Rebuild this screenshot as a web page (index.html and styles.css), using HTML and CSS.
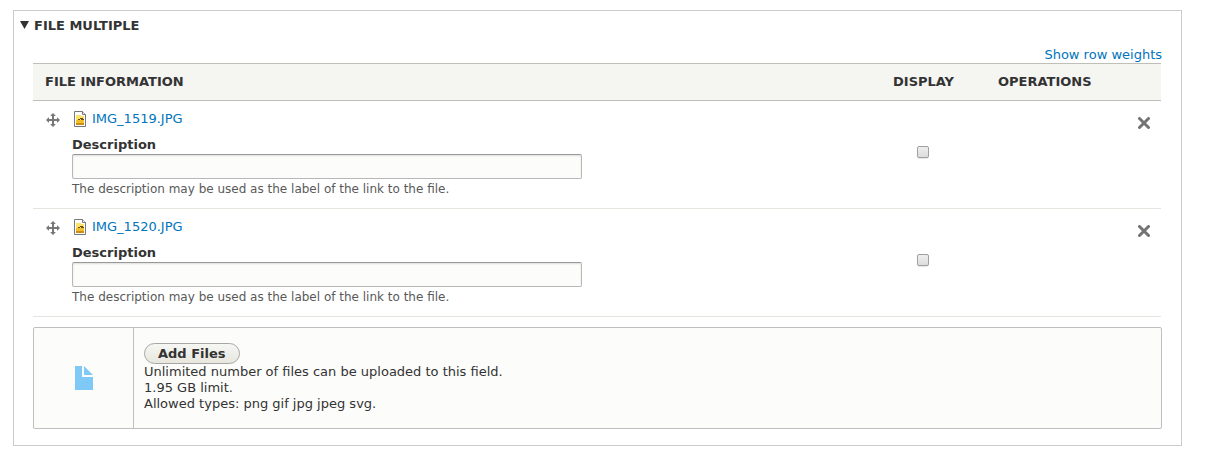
FILE: index.html
```
<!DOCTYPE html>
<html lang="en">
<head>
<meta charset="utf-8">
<title>File multiple</title>
<link rel="stylesheet" href="styles.css">
</head>
<body>
<svg class="sprites" aria-hidden="true">
  <symbol id="move" viewBox="0 0 14 14">
    <path fill="#787878" d="M7 0l2.500 2.500V3H8v3h3V4.500h.5L14 7l-2.500 2.500H11V8H8v3h1.500v.5L7 14l-2.500-2.500V11H6V8H3v1.500h-.5L0 7l2.500-2.500H3V6h3V3H4.500v-.5z"/>
  </symbol>
  <symbol id="image-file" viewBox="0 0 12 16">
    <path d="M.5.5h8l3 3v12H.5z" fill="#fff" stroke="#777"/>
    <path d="M8.500.5v3h3" fill="#eee" stroke="#777"/>
    <path d="M2 4h5v1h3v9H2z" fill="#fbe36a"/>
    <path d="M2 9h8v5H2z" fill="#f0bf2c"/>
    <path d="M2 12h8v2H2z" fill="#d08c14"/>
    <path d="M4 8h2V7h3v1h1v1H7V8H6v1H4z" fill="#6b4c10"/>
  </symbol>
  <symbol id="remove" viewBox="0 0 12 12">
    <path d="M1.500 1.500l9 9M10.500 1.500l-9 9" fill="none" stroke="#737373" stroke-width="3" stroke-linecap="round"/>
  </symbol>
  <symbol id="document" viewBox="0 0 18 24">
    <path fill="#7fc9f6" d="M0 0h7v11h11v13H0zM9 0l9 9H9z"/>
  </symbol>
</svg>
<details class="panel" open>
  <summary class="panel-title"><span class="arrow"></span>File multiple</summary>
  <div class="panel-body">
    <div class="weights"><a href="#">Show row weights</a></div>
    <div class="table-wrap">
    <table class="files">
      <thead>
        <tr><th class="info">File information</th><th class="display">Display</th><th class="operations">Operations</th></tr>
      </thead>
      <tbody>
        <tr>
          <td class="info">
            <div class="file-row">
              <a class="handle" href="#" aria-label="Drag to re-order"><svg><use href="#move"/></svg></a>
              <div class="file">
                <div class="file-name"><svg><use href="#image-file"/></svg><a href="#">IMG_1519.JPG</a></div>
                <label for="desc-1">Description</label>
                <input class="text" id="desc-1" type="text">
                <p class="help">The description may be used as the label of the link to the file.</p>
              </div>
            </div>
          </td>
          <td class="display"><input class="check" type="checkbox" aria-label="Display IMG_1519.JPG"></td>
          <td class="operations"><button class="remove" type="button" aria-label="Remove IMG_1519.JPG"><svg><use href="#remove"/></svg></button></td>
        </tr>
        <tr>
          <td class="info">
            <div class="file-row">
              <a class="handle" href="#" aria-label="Drag to re-order"><svg><use href="#move"/></svg></a>
              <div class="file">
                <div class="file-name"><svg><use href="#image-file"/></svg><a href="#">IMG_1520.JPG</a></div>
                <label for="desc-2">Description</label>
                <input class="text" id="desc-2" type="text">
                <p class="help">The description may be used as the label of the link to the file.</p>
              </div>
            </div>
          </td>
          <td class="display"><input class="check" type="checkbox" aria-label="Display IMG_1520.JPG"></td>
          <td class="operations"><button class="remove" type="button" aria-label="Remove IMG_1520.JPG"><svg><use href="#remove"/></svg></button></td>
        </tr>
      </tbody>
    </table>
    </div>
    <div class="upload">
      <div class="upload-icon"><svg><use href="#document"/></svg></div>
      <div class="upload-info">
        <button class="add" type="button">Add Files</button>
        <div>Unlimited number of files can be uploaded to this field.</div>
        <div>1.95 GB limit.</div>
        <div>Allowed types: png gif jpg jpeg svg.</div>
      </div>
    </div>
  </div>
</details>
</body>
</html>
```
FILE: styles.css
```
* {
  box-sizing: border-box;
}

body {
  margin: 10px 25px 13px 13px;
  background: #fff;
  color: #333;
  font: 13px/16px "DejaVu Sans", sans-serif;
}

a {
  color: #0074bd;
  text-decoration: none;
}

svg {
  display: block;
}

.sprites {
  display: none;
}

.panel {
  border: 1px solid #ccc;
}

.panel-title {
  display: flex;
  align-items: center;
  gap: 5px;
  padding: 7px 6px 6px;
  font-weight: bold;
  text-transform: uppercase;
  list-style: none;
}

.arrow {
  width: 9px;
  height: 8px;
  margin-bottom: 2px;
  background: #333;
  clip-path: polygon(0 0, 100% 0, 50% 100%);
}

.panel-body {
  padding: 7px 19px 16px;
}

.weights {
  text-align: right;
}

.table-wrap {
  padding-right: 1px;
}

.files {
  width: 100%;
  border-collapse: separate;
  border-spacing: 0;
  table-layout: fixed;
}

.files th {
  padding: 10px 12px;
  border: solid #bfbfba;
  border-width: 1px 0;
  background: #f5f5f2;
  text-align: left;
  text-transform: uppercase;
}

.files td {
  padding: 10px 11px 11px 12px;
  border-bottom: 1px solid #e6e4df;
}

.files .display {
  width: 84px;
  text-align: center;
}

.files td.display {
  padding: 6px 12px 12px;
}

.files .operations {
  width: 196px;
}

.files th.operations {
  padding-left: 33px;
}

.files td.operations {
  text-align: right;
  vertical-align: top;
}

.file-row {
  display: flex;
  gap: 12px;
}

.handle {
  padding: 2px 0 0 1px;
}

.handle svg {
  width: 14px;
  height: 14px;
}

.file {
  flex: 1;
}

.file-name {
  display: flex;
  gap: 6px;
  margin-bottom: 10px;
  padding-left: 2px;
}

.file-name svg {
  width: 12px;
  height: 16px;
}

.file label {
  display: block;
  margin-bottom: 1px;
  font-weight: bold;
}

.text {
  display: block;
  width: 510px;
  max-width: 100%;
  height: 25px;
  padding: 3px 6px;
  border: 1px solid #b8b8b8;
  border-top-color: #999;
  border-radius: 2px;
  background: #fcfcfa;
  box-shadow: inset 0 1px 2px rgba(0, 0, 0, 0.125);
  font: inherit;
}

.help {
  margin: 2px 0 0;
  color: #595959;
  font-size: 12px;
}

.check {
  display: block;
  appearance: none;
  width: 12px;
  height: 12px;
  margin: 0 auto;
  border: 1px solid #a0a0a0;
  border-radius: 2px;
  background: linear-gradient(#eee, #dcdcdc);
  box-shadow: 0 1px 1px rgba(0, 0, 0, 0.1);
}

.remove {
  padding: 6px 0 0;
  border: 0;
  background: none;
}

.remove svg {
  width: 12px;
  height: 12px;
}

.upload {
  display: flex;
  margin-top: 10px;
  border: 1px solid #bfbfbf;
  border-radius: 2px;
  background: #fcfcfa;
}

.upload-icon {
  display: grid;
  place-items: center;
  width: 100px;
  border-right: 1px solid #bfbfbf;
}

.upload-icon svg {
  width: 18px;
  height: 24px;
}

.upload-info {
  flex: 1;
  padding: 15px 10px 16px;
}

.add {
  display: block;
  height: 21px;
  padding: 0 13px;
  border: 1px solid #a6a6a6;
  border-radius: 20px;
  background: linear-gradient(#f6f6f3, #e7e7df);
  color: #333;
  font: bold 13px/16px "DejaVu Sans", sans-serif;
}
```
